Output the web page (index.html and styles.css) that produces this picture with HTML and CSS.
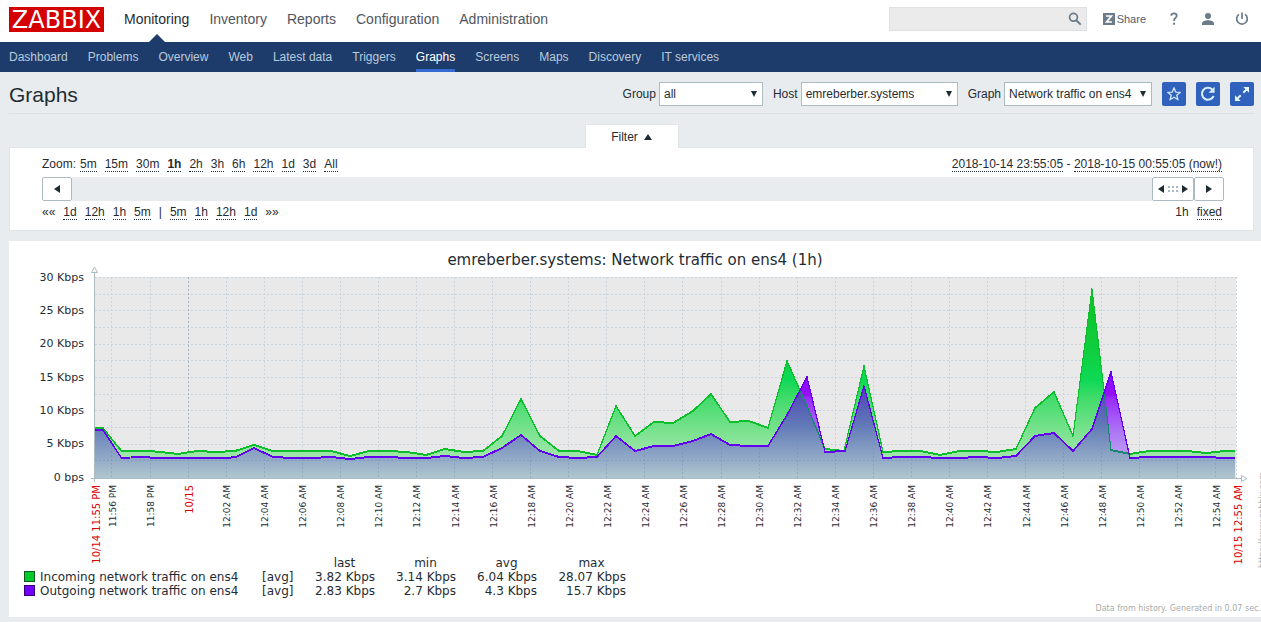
FILE: index.html
```html
<!DOCTYPE html>
<html lang="en">
<head>
<meta charset="utf-8">
<title>Graphs</title>
<link rel="stylesheet" href="styles.css">
</head>
<body>
<header class="top">
  <a class="logo" href="#">ZABBIX</a>
  <nav class="main-nav">
    <a class="active" href="#">Monitoring</a>
    <a href="#">Inventory</a>
    <a href="#">Reports</a>
    <a href="#">Configuration</a>
    <a href="#">Administration</a>
  </nav>
  <form class="search">
    <input type="text" aria-label="Search">
    <button type="button" aria-label="Search">
      <svg width="14" height="14" viewBox="0 0 14 14"><circle cx="5.5" cy="5.3" r="3.9" fill="none" stroke="#6b7b8a" stroke-width="1.7"/><path d="M8.3 8.2l4.400 4.400" stroke="#6b7b8a" stroke-width="2"/></svg>
    </button>
  </form>
  <a class="share" href="#">
    <svg width="12" height="12" viewBox="0 0 12 12"><path fill="#6b7b8a" d="M0 0h12v12H0z"/><path fill="none" stroke="#fff" stroke-width="1.7" d="M3 3h5.4L3.600 9H9"/></svg>
    <span>Share</span>
  </a>
  <a class="top-icon" href="#" aria-label="Help">
    <svg width="14" height="14" viewBox="0 0 14 14"><path fill="none" stroke="#6b7b8a" stroke-width="1.8" d="M4.200 3.700C4.300 2 5.400 1.300 7 1.300s2.700.9 2.700 2.400c0 2-2.600 2.300-2.600 4.500v.8"/><path fill="#6b7b8a" d="M6.100 10.700h2v2h-2z"/></svg>
  </a>
  <a class="top-icon" href="#" aria-label="User profile">
    <svg width="14" height="14" viewBox="0 0 14 14"><circle cx="7" cy="4" r="3" fill="#6b7b8a"/><path fill="#6b7b8a" d="M1 13v-1.500C1 9.500 4 8.300 7 8.300s6 1.200 6 3.200V13z"/></svg>
  </a>
  <a class="top-icon" href="#" aria-label="Sign out">
    <svg width="14" height="14" viewBox="0 0 14 14"><path fill="none" stroke="#6b7b8a" stroke-width="1.700" d="M4 2.400a5.300 5.300 0 1 0 6 0M7 .5v6.500"/></svg>
  </a>
</header>

<nav class="sub-nav">
  <a href="#">Dashboard</a>
  <a href="#">Problems</a>
  <a href="#">Overview</a>
  <a href="#">Web</a>
  <a href="#">Latest data</a>
  <a href="#">Triggers</a>
  <a class="active" href="#">Graphs</a>
  <a href="#">Screens</a>
  <a href="#">Maps</a>
  <a href="#">Discovery</a>
  <a href="#">IT services</a>
</nav>

<main>
  <div class="title-row">
    <h1>Graphs</h1>
    <form class="selectors">
      <div class="field">
        <label for="group">Group</label>
        <span class="select group"><select id="group"><option>all</option></select></span>
      </div>
      <div class="field">
        <label for="host">Host</label>
        <span class="select host"><select id="host"><option>emreberber.systems</option></select></span>
      </div>
      <div class="field">
        <label for="graph">Graph</label>
        <span class="select graph"><select id="graph"><option>Network traffic on ens4</option></select></span>
      </div>
      <button class="action" type="button" aria-label="Add to favourites">
        <svg width="24" height="24" viewBox="0 0 24 24"><path fill="none" stroke="#cfe6f7" stroke-width="1.300" stroke-linejoin="round" d="M12 5.700l1.700 4.400 4.700.2-3.700 2.900 1.300 4.600-4-2.600-4 2.600 1.300-4.600-3.700-2.900 4.700-.2z"/></svg>
      </button>
      <button class="action" type="button" aria-label="Refresh">
        <svg width="24" height="24" viewBox="0 0 24 24"><path fill="none" stroke="#d6ecfa" stroke-width="2.100" d="M16.200 7.500A6 6 0 1 0 17.600 13.800"/><path fill="#d6ecfa" d="M18.600 4.700v6.100h-6.100z"/></svg>
      </button>
      <button class="action" type="button" aria-label="Full screen">
        <svg width="24" height="24" viewBox="0 0 24 24"><path fill="#e4f3fc" d="M13.300 5h5.700v5.700zM5 13.300V19h5.700z"/><path stroke="#e4f3fc" stroke-width="2" d="M13.300 10.700L17 7M10.700 13.300L7 17"/></svg>
      </button>
    </form>
  </div>

  <section class="filter">
    <button class="filter-tab" type="button">Filter <svg width="8" height="6" viewBox="0 0 8 6"><path fill="#1f2c33" d="M4 0l4 6H0z"/></svg></button>
    <div class="filter-box">
      <div class="row">
        <div class="links zoom-links">
          <span>Zoom:</span>
          <a href="#">5m</a><a href="#">15m</a><a href="#">30m</a><a class="current" href="#">1h</a><a href="#">2h</a><a href="#">3h</a><a href="#">6h</a><a href="#">12h</a><a href="#">1d</a><a href="#">3d</a><a href="#">All</a>
        </div>
        <div class="period"><a href="#">2018-10-14 23:55:05</a> - <a href="#">2018-10-15 00:55:05 (now!)</a></div>
      </div>
      <div class="scrollbar">
        <button type="button" aria-label="Earlier"><svg width="6" height="8" viewBox="0 0 6 8"><path fill="#1f2c33" d="M6 0v8L0 4z"/></svg></button>
        <span class="track"></span>
        <button class="handle" type="button" aria-label="Period">
          <svg width="30" height="8" viewBox="0 0 30 8"><path fill="#1f2c33" d="M6 0v8L0 4zM24 0v8l6-4z"/><path fill="#a9bac4" d="M10 1h2v2h-2zM14 1h2v2h-2zM18 1h2v2h-2zM10 5h2v2h-2zM14 5h2v2h-2zM18 5h2v2h-2z"/></svg>
        </button>
        <button type="button" aria-label="Later"><svg width="6" height="8" viewBox="0 0 6 8"><path fill="#1f2c33" d="M0 0v8l6-4z"/></svg></button>
      </div>
      <div class="row">
        <div class="links">
          <span>««</span><a href="#">1d</a><a href="#">12h</a><a href="#">1h</a><a href="#">5m</a><span>|</span><a href="#">5m</a><a href="#">1h</a><a href="#">12h</a><a href="#">1d</a><span>»»</span>
        </div>
        <div class="links"><span>1h</span><a href="#">fixed</a></div>
      </div>
    </div>
  </section>

  <section class="chart">
    <h2>emreberber.systems: Network traffic on ens4 (1h)</h2>
    <svg class="plot" viewBox="9 268 1252 288" role="img" aria-label="Network traffic graph">
      <defs>
        <linearGradient id="in" gradientUnits="userSpaceOnUse" x1="0" y1="278" x2="0" y2="478">
          <stop offset="0" stop-color="#00bc14"/>
          <stop offset=".35" stop-color="#00cc32"/>
          <stop offset=".51" stop-color="#00d84c"/>
          <stop offset=".6" stop-color="#36da62"/>
          <stop offset=".78" stop-color="#78e28c"/>
          <stop offset="1" stop-color="#bdeac0"/>
        </linearGradient>
        <linearGradient id="out" gradientUnits="userSpaceOnUse" x1="0" y1="370" x2="0" y2="478">
          <stop offset="0" stop-color="#7c00ff"/>
          <stop offset=".23" stop-color="#9200ff"/>
          <stop offset=".26" stop-color="#9420fb"/>
          <stop offset=".6" stop-color="#ab75f5"/>
          <stop offset="1" stop-color="#cbb8f0"/>
        </linearGradient>
        <linearGradient id="both" gradientUnits="userSpaceOnUse" x1="0" y1="385" x2="0" y2="478">
          <stop offset="0" stop-color="#4b3fb4"/>
          <stop offset=".45" stop-color="#637cb8"/>
          <stop offset="1" stop-color="#b0c6cf"/>
        </linearGradient>
        <path id="in-line" d="M94.500 428H103L121.500 451H150L160 452L178 454L197 451L216 452L235 451L254 445L273 451H331L350 456L369 451H388L407 452L426 455L445 449L464 452L483 451L502 436L521 399L540 436L559 451H578L597 455L616 406L635 436L654 422L673 423L693 411L711 394L730 422L749 421L768 428L787 361L806 404L825 449L844 451L864 366L883 452L902 451H921L940 455L959 451H978L997 452L1016 449L1035 408L1054 392L1073 436L1092 289L1111 450L1130 454L1149 451H1187L1206 453L1225 451H1235"/>
        <path id="out-line" d="M94.500 430H103L121.500 458L140 457L160 458H226L236 457L254 448L273 457L292 458H312L331 457L350 459L369 457H388L407 458H426L445 456L464 458L483 457L502 448L521 435L540 451L559 457L578 458L597 457L616 436L635 451L654 446H673L693 441L711 434L730 445L749 446H768L787 415L807 377L825 452L845 451L864 386L883 458L902 457H921L940 458H959L978 457L997 458L1016 456L1035 436L1054 433L1073 451L1092 429L1111 372L1130 458L1149 457H1206L1225 458H1235"/>
        <clipPath id="in-area"><path d="M94.500 428H103L121.500 451H150L160 452L178 454L197 451L216 452L235 451L254 445L273 451H331L350 456L369 451H388L407 452L426 455L445 449L464 452L483 451L502 436L521 399L540 436L559 451H578L597 455L616 406L635 436L654 422L673 423L693 411L711 394L730 422L749 421L768 428L787 361L806 404L825 449L844 451L864 366L883 452L902 451H921L940 455L959 451H978L997 452L1016 449L1035 408L1054 392L1073 436L1092 289L1111 450L1130 454L1149 451H1187L1206 453L1225 451H1235V478H94.500z"/></clipPath>
        <clipPath id="out-area"><path d="M94.500 430H103L121.500 458L140 457L160 458H226L236 457L254 448L273 457L292 458H312L331 457L350 459L369 457H388L407 458H426L445 456L464 458L483 457L502 448L521 435L540 451L559 457L578 458L597 457L616 436L635 451L654 446H673L693 441L711 434L730 445L749 446H768L787 415L807 377L825 452L845 451L864 386L883 458L902 457H921L940 458H959L978 457L997 458L1016 456L1035 436L1054 433L1073 451L1092 429L1111 372L1130 458L1149 457H1206L1225 458H1235V478H94.500z"/></clipPath>
      </defs>

      <path fill="#e9e9e9" d="M95 277h1141v201H95z"/>
      <path class="grid" d="M95 277.500H1236M95 294.500H1236M95 310.500H1236M95 327.500H1236M95 344.500H1236M95 360.500H1236M95 377.500H1236M95 394.500H1236M95 410.500H1236M95 427.500H1236M95 444.500H1236M95 460.500H1236"/>
      <path class="grid" d="M111.500 277V478M150.500 277V478M226.500 277V478M264.500 277V478M302.500 277V478M340.500 277V478M378.500 277V478M416.500 277V478M454.500 277V478M492.500 277V478M530.500 277V478M568.500 277V478M606.500 277V478M644.500 277V478M682.500 277V478M721.500 277V478M759.500 277V478M797.500 277V478M835.500 277V478M873.500 277V478M911.500 277V478M949.500 277V478M987.500 277V478M1025.500 277V478M1063.500 277V478M1101.500 277V478M1139.500 277V478M1177.500 277V478M1215.500 277V478M1236.500 277V478"/>
      <path class="grid day" d="M188.500 277V478"/>

      <g clip-path="url(#in-area)"><path fill="url(#in)" opacity=".94" d="M94 277h1141v201H94z"/></g>
      <g class="line-in"><use href="#in-line" y="-.5"/><use href="#in-line" y=".5"/></g>
      <g clip-path="url(#out-area)">
        <path fill="url(#out)" opacity=".94" d="M94 277h1141v201H94z"/>
        <g clip-path="url(#in-area)"><path fill="url(#both)" d="M94 277h1141v201H94z"/></g>
        <g class="line-under"><use href="#in-line" y="-.5"/><use href="#in-line" y=".5"/></g>
        <path class="grid faint" d="M95 460.500H1236M111.500 427V478M150.500 451V478M188.500 451V478M226.500 451V478M264.500 451V478M302.500 451V478M340.500 451V478M378.500 451V478M416.500 451V478M454.500 451V478M492.500 451V478M530.500 444V478M568.500 451V478M606.500 444V478M644.500 451V478M682.500 444V478M721.500 444V478M759.500 444V478M797.500 444V478M835.500 451V478M873.500 444V478M911.500 451V478M949.500 451V478M987.500 451V478M1025.500 451V478M1063.500 444V478M1101.500 444V478M1139.500 451V478M1177.500 451V478M1215.500 451V478"/>
      </g>
      <g class="line-out"><use href="#out-line" y="-.5"/><use href="#out-line" y=".5"/></g>

      <path class="axis" d="M94.500 273V482M91 478.500H1241"/>
      <path class="arrow" d="M91.500 272.500h6l-3-5.500zM1241.500 475.500v6l5.500-3z"/>

      <g class="y-labels">
        <text x="84" y="281">30 Kbps</text><text x="84" y="314">25 Kbps</text><text x="84" y="347">20 Kbps</text><text x="84" y="381">15 Kbps</text><text x="84" y="414">10 Kbps</text><text x="84" y="447">5 Kbps</text><text x="84" y="481">0 bps</text>
      </g>
      <g class="x-labels">
        <text transform="translate(116 485) rotate(-90)">11:56 PM</text>
        <text transform="translate(154 485) rotate(-90)">11:58 PM</text>
        <text transform="translate(230 485) rotate(-90)">12:02 AM</text>
        <text transform="translate(268 485) rotate(-90)">12:04 AM</text>
        <text transform="translate(306 485) rotate(-90)">12:06 AM</text>
        <text transform="translate(344 485) rotate(-90)">12:08 AM</text>
        <text transform="translate(382 485) rotate(-90)">12:10 AM</text>
        <text transform="translate(420 485) rotate(-90)">12:12 AM</text>
        <text transform="translate(459 485) rotate(-90)">12:14 AM</text>
        <text transform="translate(497 485) rotate(-90)">12:16 AM</text>
        <text transform="translate(535 485) rotate(-90)">12:18 AM</text>
        <text transform="translate(573 485) rotate(-90)">12:20 AM</text>
        <text transform="translate(611 485) rotate(-90)">12:22 AM</text>
        <text transform="translate(649 485) rotate(-90)">12:24 AM</text>
        <text transform="translate(687 485) rotate(-90)">12:26 AM</text>
        <text transform="translate(725 485) rotate(-90)">12:28 AM</text>
        <text transform="translate(763 485) rotate(-90)">12:30 AM</text>
        <text transform="translate(801 485) rotate(-90)">12:32 AM</text>
        <text transform="translate(839 485) rotate(-90)">12:34 AM</text>
        <text transform="translate(877 485) rotate(-90)">12:36 AM</text>
        <text transform="translate(915 485) rotate(-90)">12:38 AM</text>
        <text transform="translate(953 485) rotate(-90)">12:40 AM</text>
        <text transform="translate(991 485) rotate(-90)">12:42 AM</text>
        <text transform="translate(1030 485) rotate(-90)">12:44 AM</text>
        <text transform="translate(1068 485) rotate(-90)">12:46 AM</text>
        <text transform="translate(1106 485) rotate(-90)">12:48 AM</text>
        <text transform="translate(1144 485) rotate(-90)">12:50 AM</text>
        <text transform="translate(1182 485) rotate(-90)">12:52 AM</text>
        <text transform="translate(1220 485) rotate(-90)">12:54 AM</text>
      </g>
      <g class="x-labels date">
        <text transform="translate(100 485) rotate(-90)">10/14 11:55 PM</text>
        <text transform="translate(193 485) rotate(-90)">10/15</text>
        <text transform="translate(1242 485) rotate(-90)">10/15 12:55 AM</text>
      </g>
      <text class="credit" transform="translate(1265 568) rotate(-90)">https://www.zabbix.com</text>
    </svg>

    <table class="legend">
      <thead>
        <tr><th class="name"></th><th class="kind"></th><th>last</th><th>min</th><th>avg</th><th class="max">max</th></tr>
      </thead>
      <tbody>
        <tr><td class="name"><span class="swatch incoming"></span>Incoming network traffic on ens4</td><td class="kind">[avg]</td><td>3.82 Kbps</td><td>3.14 Kbps</td><td>6.04 Kbps</td><td>28.07 Kbps</td></tr>
        <tr><td class="name"><span class="swatch outgoing"></span>Outgoing network traffic on ens4</td><td class="kind">[avg]</td><td>2.83 Kbps</td><td>2.7 Kbps</td><td>4.3 Kbps</td><td>15.7 Kbps</td></tr>
      </tbody>
    </table>
    <p class="generated">Data from history. Generated in 0.07 sec.</p>
  </section>
</main>
</body>
</html>
```

FILE: styles.css
```css
* { box-sizing: border-box; }

body {
  margin: 0;
  background: #e8ecef;
  color: #1f2c33;
  font: 12px/16px "Liberation Sans", Arial, sans-serif;
  overflow-x: hidden;
}

a { color: inherit; text-decoration: none; }
button, input, select { font: inherit; color: inherit; margin: 0; }
svg { display: block; }

/* Header */
.top {
  display: flex;
  align-items: center;
  height: 42px;
  padding: 0 9px;
  background: #fff;
}
.logo {
  width: 95px;
  height: 25px;
  margin: -3px 20px 0 0;
  background: #d40000;
  color: #fff;
  font: 24px/27px "DejaVu Sans", sans-serif;
  text-align: center;
}
.main-nav {
  display: flex;
  align-self: stretch;
  gap: 20px;
  margin-right: auto;
  color: #50565e;
  font-size: 14px;
  line-height: 38px;
}
.main-nav .active {
  position: relative;
  color: #1f2c33;
}
.main-nav .active::after {
  content: "";
  position: absolute;
  left: 50%;
  bottom: 0;
  margin-left: -8px;
  border: 8px solid transparent;
  border-top: 0;
  border-bottom-color: #1e3c6b;
}
.search {
  display: flex;
  width: 198px;
  height: 24px;
  margin: -4px 16px 0 0;
  border: 1px solid #dfe2e4;
  background: #ebebeb;
}
.search input {
  flex: 1;
  min-width: 0;
  border: 0;
  background: transparent;
}
.search button {
  padding: 0 4px;
  border: 0;
  background: transparent;
}
.share {
  display: flex;
  align-items: center;
  gap: 2px;
  margin: -4px 21px 0 0;
  color: #50606f;
  font-size: 11px;
}
.top-icon { margin: -4px 20px 0 0; }
.top-icon:last-child { margin-right: 3px; }

.sub-nav {
  display: flex;
  gap: 20px;
  height: 30px;
  padding: 0 9px;
  background: #1e3c6b;
  color: #b9cbdc;
  line-height: 30px;
}
.sub-nav .active {
  border-bottom: 3px solid #346bd0;
  color: #fff;
}

/* Page title and selectors */
main { padding-left: 9px; }
.title-row {
  display: flex;
  justify-content: space-between;
  align-items: center;
  height: 42px;
  margin-right: 7px;
  padding-top: 2px;
  border-bottom: 1px solid #dbe1e5;
}
h1 {
  margin: 0;
  padding-top: 2px;
  font-size: 21px;
  font-weight: normal;
  line-height: 24px;
}
.selectors, .field { display: flex; align-items: center; }
.selectors { gap: 10px; }
.field { gap: 3px; }
.select { position: relative; }
.select select {
  width: 100%;
  height: 24px;
  padding: 0 4px;
  border: 1px solid #acbbc2;
  border-radius: 0;
  background: #fff;
  appearance: none;
}
.select::after {
  content: "";
  position: absolute;
  right: 6px;
  top: 9px;
  border: 3px solid transparent;
  border-top: 6px solid #1f2c33;
  border-bottom: 0;
  pointer-events: none;
}
.group { width: 104px; }
.host { width: 157px; }
.graph { width: 148px; }
.action {
  width: 24px;
  height: 24px;
  padding: 0;
  border: 0;
  border-radius: 2px;
  background: #2f61bd;
}

/* Filter */
.filter {
  margin: 10px 7px 10px 0;
}
.filter-tab {
  display: flex;
  position: relative;
  align-items: center;
  justify-content: center;
  gap: 6px;
  width: 94px;
  height: 24px;
  margin: 0 auto -1px;
  border: 1px solid #dfe4e7;
  border-bottom: 0;
  background: #fff;
}
.filter-box {
  padding: 8px 29px 10px 32px;
  border: 1px solid #dfe4e7;
  background: #fff;
}
.row {
  display: flex;
  justify-content: space-between;
  padding-right: 2px;
}
.links { display: flex; gap: 8px; }
.zoom-links span { margin-right: -4px; }
.links a, .period a { border-bottom: 1px dotted #1f2c33; }
.links a, .links span {
  padding-top: 2px;
  line-height: 13px;
}
.links .current { font-weight: bold; }
.scrollbar {
  display: flex;
  height: 24px;
  margin: 5px 0 3px;
}
.scrollbar button {
  display: flex;
  align-items: center;
  justify-content: center;
  width: 30px;
  padding: 0;
  border: 1px solid #acbbc2;
  border-radius: 2px;
  background: #fff;
}
.scrollbar .handle { width: 42px; }
.track { flex: 1; background: #e8ecef; }

/* Chart */
.chart {
  background: #fff;
  font-family: "DejaVu Sans", sans-serif;
}
h2 {
  margin: 0;
  padding: 11px 0 0;
  font-size: 15px;
  font-weight: normal;
  line-height: 16px;
  text-align: center;
}
.plot { width: 100%; overflow: visible; }
.grid {
  fill: none;
  stroke: #c8d2da;
  stroke-dasharray: 2 2;
  shape-rendering: crispEdges;
}
.day { stroke: #a2b3bf; }
.faint { stroke: #5d87a8; opacity: .35; }
.line-in, .line-out, .line-under {
  fill: none;
  stroke-width: 1;
  shape-rendering: crispEdges;
}
.line-in { stroke: #0bbf2a; }
.line-out { stroke: #6400f0; }
.line-under { stroke: #128a6c; }
.axis { stroke: #acbbc2; shape-rendering: crispEdges; }
.arrow { fill: #fff; stroke: #acbbc2; }
.plot text { fill: #1f2c33; }
.y-labels { font-size: 11px; text-anchor: end; }
.x-labels { font-size: 9px; text-anchor: end; }
.plot .date text { fill: #e00000; font-size: 10px; }
.plot .credit { fill: #aaa; font-size: 8px; }

.legend {
  margin-left: 15px;
  border-collapse: collapse;
  table-layout: fixed;
  width: 602px;
  font-size: 12px;
  line-height: 14px;
}
.legend tr { height: 14px; }
.legend th, .legend td {
  padding: 0;
  font-weight: normal;
  text-align: right;
  white-space: nowrap;
}
.legend th {
  width: 81px;
  padding-left: 20px;
  text-align: center;
}
.legend .name { width: 238px; padding: 0; text-align: left; }
.legend .kind { width: 32px; padding: 0; text-align: left; }
.legend .max { width: 89px; }
.swatch {
  display: inline-block;
  width: 11px;
  height: 11px;
  margin-right: 5px;
  border: 1px solid #0a5c1c;
  vertical-align: -1px;
}
.incoming { background: #00c92c; }
.outgoing { border-color: #35007a; background: #7300ff; }
.generated {
  margin: 0;
  padding-top: 3px;
  color: #aaa;
  font-size: 8px;
  line-height: 16px;
  text-align: right;
}
```
